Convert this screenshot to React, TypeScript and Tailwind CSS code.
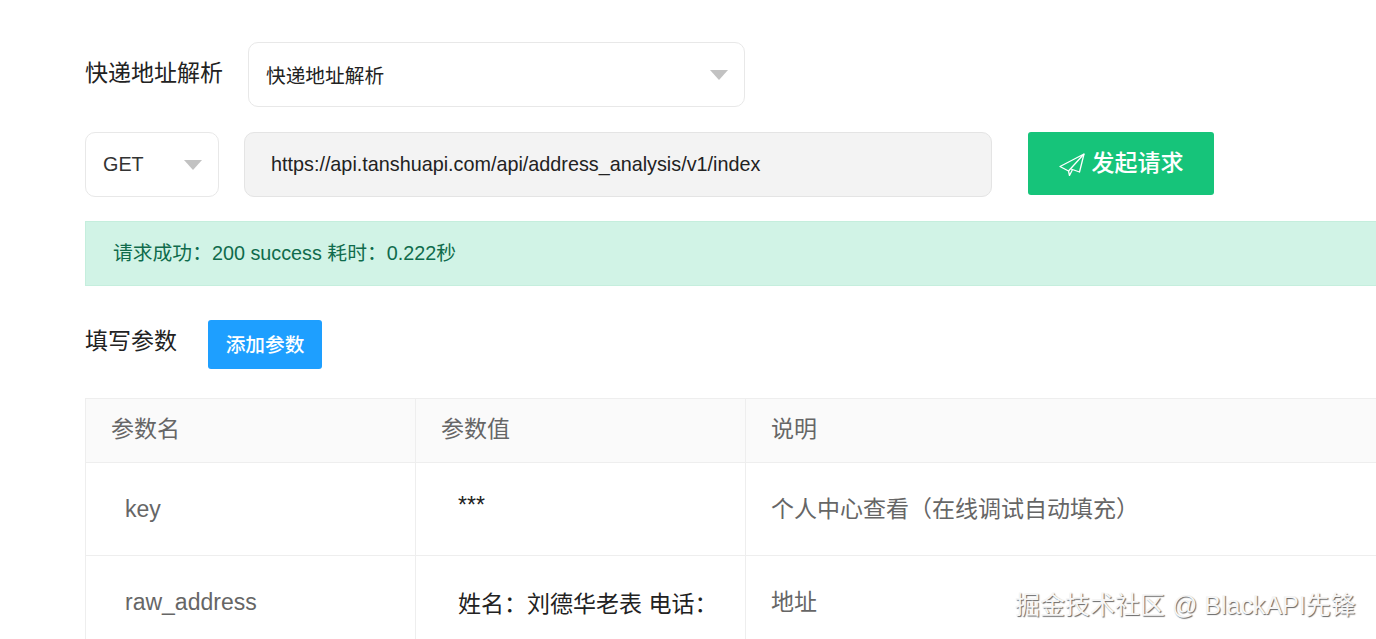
const font = '[font-family:"Liberation_Sans","Noto_Sans_CJK_SC",sans-serif]'

function Caret() {
  return <span className="w-0 h-0 border-x-[9px] border-x-transparent border-t-[10px] border-t-[#c2c2c2]" />
}

function PlaneIcon() {
  return (
    <svg width="26" height="24" viewBox="0 0 26 24" fill="none" stroke="currentColor" strokeWidth="1.3" strokeLinejoin="round">
      <path d="M25 2 L1 14.5 L9.5 19 L25 2 Z" />
      <path d="M25 2 L20.5 20 L12 17" />
      <path d="M9.5 19 L10.5 23.5 L13.5 17.5" />
    </svg>
  )
}

const rows = [
  { name: 'key', value: '***', desc: '个人中心查看（在线调试自动填充）', top: 'pt-[25px]' },
  { name: 'raw_address', value: '姓名：刘德华老表 电话：', desc: '地址', top: 'pt-[31px]' },
]

export default function App() {
  return (
    <div className={`${font} relative h-[639px] overflow-hidden bg-white pl-[85px] pt-[42px] text-[#1f1f1f]`}>
      <div className="w-[1400px]">
        <div className="flex items-start">
          <label className="w-[163px] pt-[15px] text-[23px] leading-[32px] text-[#222]">快递地址解析</label>
          <div className="flex h-[65px] w-[497px] items-center justify-between rounded-[10px] border border-[#e8e8e8] pl-[17px] pr-[16px]">
            <span className="pt-[4px] text-[19.7px] text-[#222]">快递地址解析</span>
            <Caret />
          </div>
        </div>

        <div className="mt-[25px] flex items-start">
          <div className="flex h-[65px] w-[134px] items-center justify-between rounded-[10px] border border-[#e8e8e8] pl-[17px] pr-[16px]">
            <span className="text-[19.8px] text-[#333]">GET</span>
            <Caret />
          </div>
          <div className="ml-[25px] flex h-[65px] w-[748px] items-center rounded-[10px] border border-[#e4e4e4] bg-[#f3f3f3] pl-[26px] text-[19.8px] text-[#222]">
            https://api.tanshuapi.com/api/address_analysis/v1/index
          </div>
          <button className="ml-[36px] flex h-[63px] w-[186px] items-center justify-center gap-[7px] rounded-[3px] bg-[#16c47a] text-[23px] font-medium text-white">
            <PlaneIcon />
            发起请求
          </button>
        </div>

        <div className="mt-[24px] flex h-[65px] items-center border border-[#c5eedd] bg-[#d1f3e6] pl-[27px] text-[19.8px] text-[#0f6b4c]">
          请求成功：200 success 耗时：0.222秒
        </div>

        <div className="mt-[34px] flex items-start">
          <span className="w-[123px] pt-[5px] text-[23px] leading-[32px] text-[#222]">填写参数</span>
          <button className="h-[49px] w-[114px] rounded-[3px] bg-[#1e9fff] pt-[2px] text-[19.7px] font-medium text-white">添加参数</button>
        </div>

        <table className="mt-[29px] w-full table-fixed border-collapse border border-[#eeeeee] text-[23px]">
          <thead>
            <tr className="h-[64px] bg-[#fafafa] text-left text-[#666]">
              <th className="w-[330px] border border-[#eeeeee] pb-[2px] pl-[25px] font-normal">参数名</th>
              <th className="w-[330px] border border-[#eeeeee] pb-[2px] pl-[25px] font-normal">参数值</th>
              <th className="border border-[#eeeeee] pb-[2px] pl-[25px] font-normal">说明</th>
            </tr>
          </thead>
          <tbody>
            {rows.map((r) => (
              <tr key={r.name} className="h-[93px]">
                <td className="border border-[#eeeeee] pl-[39px] text-[#666]">{r.name}</td>
                <td className={`border border-[#eeeeee] pl-[42px] align-top text-[#222] ${r.top}`}>{r.value}</td>
                <td className="border border-[#eeeeee] pl-[25px] text-[#666]">{r.desc}</td>
              </tr>
            ))}
          </tbody>
        </table>
      </div>

      <div className="absolute left-[1015px] top-[588px] whitespace-nowrap text-[25px] leading-[34px] text-[#f6f6f6] [text-shadow:1px_1px_1px_#666]">
        掘金技术社区 @ BlackAPI先锋
      </div>
    </div>
  )
}
